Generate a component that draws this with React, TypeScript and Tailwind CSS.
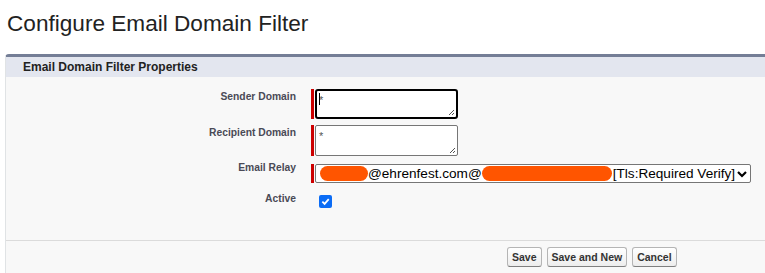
import React from "react";

function Req() {
  return <span className="mr-px h-full w-[3px] shrink-0 bg-[#c00]" />;
}

export default function App() {
  return (
    <div className="h-[273px] w-[765px] overflow-hidden bg-white font-['Liberation_Sans',Arial,sans-serif] text-[#222]">
      <h1 className="px-[7px] pt-[10px] text-[22.6px] leading-[28px] text-[#222]">Configure Email Domain Filter</h1>

      <div className="ml-[5px] mt-[16px] rounded-tl-[4px] border-t-[3px] border-l border-t-[#747e96] border-l-[#e0e3e5] bg-[#f8f8f8]">
        <div className="h-[20px] bg-[#e3e6ef] pl-[17px] text-[12px] font-bold leading-[20px] text-[#222]">
          Email Domain Filter Properties
        </div>

        <div className="pt-[12px] text-[10.3px]">
          {/* Sender Domain */}
          <div className="flex">
            <div className="w-[290px] text-right font-bold text-[#4a4a56]">Sender Domain</div>
            <div className="ml-[15px] flex h-[30px] items-stretch">
              <Req />
              <div className="relative w-[143px] rounded-[3px] border-2 border-black bg-white">
                <span className="absolute left-[2px] top-[1px] text-[11px] text-[#555]">*</span>
                <span className="absolute left-[2px] top-[2px] h-[12px] w-px bg-black" />
                <Grip />
              </div>
            </div>
          </div>

          {/* Recipient Domain */}
          <div className="mt-[6px] flex">
            <div className="w-[290px] text-right font-bold text-[#4a4a56]">Recipient Domain</div>
            <div className="ml-[15px] flex h-[31px] items-stretch">
              <Req />
              <div className="relative w-[143px] rounded-[2px] border border-[#767676] bg-white">
                <span className="absolute left-[3px] top-[2px] text-[11px] text-[#555]">*</span>
                <Grip />
              </div>
            </div>
          </div>

          {/* Email Relay */}
          <div className="mt-[8px] flex">
            <div className="-mt-[4px] w-[290px] text-right font-bold text-[#4a4a56]">Email Relay</div>
            <div className="ml-[15px] flex h-[19px] items-stretch">
              <Req />
              <div className="flex w-[436px] items-center whitespace-nowrap rounded-[2px] border border-[#767676] bg-white pl-[4px] pr-[2px] text-[13.6px] leading-none text-black">
                <span className="h-[15px] w-[48px] shrink-0 rounded-full bg-[#ff5500]" />
                <span>@ehrenfest.com@</span>
                <span className="h-[15px] w-[130px] shrink-0 rounded-full bg-[#ff5500]" />
                <span className="ml-[1px]">[Tls:Required Verify]</span>
                <svg className="ml-auto shrink-0" width="12" height="12" viewBox="0 0 12 12">
                  <path d="M2 4 L6 8 L10 4" fill="none" stroke="black" strokeWidth="2.2" />
                </svg>
              </div>
            </div>
          </div>

          {/* Active */}
          <div className="mt-[11px] flex">
            <div className="-mt-[3px] w-[290px] text-right font-bold text-[#4a4a56]">Active</div>
            <div className="ml-[23px] mt-[1px] flex h-[13px] w-[13px] items-center justify-center rounded-[2px] bg-[#0b6cf5]">
              <svg width="9" height="9" viewBox="0 0 10 10">
                <path d="M1.5 5.2 L4 7.6 L8.6 2.4" fill="none" stroke="white" strokeWidth="2" />
              </svg>
            </div>
          </div>

          <div className="mt-[32px] border-t border-[#dbdbdb]" />
          <div className="flex gap-[5px] pl-[501px] pt-[6px] pb-[6px]">
            <Btn>Save</Btn>
            <Btn>Save and New</Btn>
            <Btn>Cancel</Btn>
          </div>
        </div>
      </div>
    </div>
  );
}

function Grip() {
  return (
    <svg className="absolute bottom-[1px] right-[1px]" width="8" height="8" viewBox="0 0 8 8">
      <path d="M7 2 L2 7 M7 5 L5 7" stroke="#555" strokeWidth="1" />
    </svg>
  );
}

function Btn({ children }: { children: React.ReactNode }) {
  return (
    <button className="h-[20px] rounded-[3px] border border-[#b5b5b5] border-b-[#7f7f7f] bg-gradient-to-b from-white to-[#ededed] px-[4px] text-[10.5px] font-bold leading-none text-[#333]">
      {children}
    </button>
  );
}
